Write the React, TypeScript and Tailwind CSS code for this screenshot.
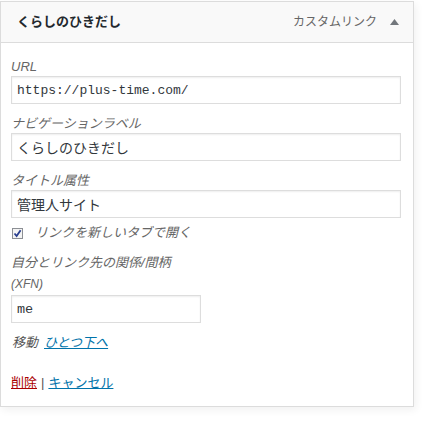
const jp = '"Liberation Sans", "Noto Sans CJK JP", sans-serif'
const mono = '"Liberation Mono", "DejaVu Sans Mono", monospace'

function Field({ label, value, monoText }: { label: React.ReactNode; value: string; monoText?: boolean }) {
  return (
    <div className="mb-[10px]">
      <div className="text-[13px] leading-[19px] italic text-[#666]">{label}</div>
      <input
        readOnly
        value={value}
        style={{ fontFamily: monoText ? mono : jp }}
        className={`w-[390px] h-[28px] border border-[#ddd] bg-white pl-[5px] ${monoText ? 'text-[13px]' : 'text-[14px]'} text-[#32373c] shadow-[inset_0_1px_2px_rgba(0,0,0,0.07)] outline-none`}
      />
    </div>
  )
}

export default function App() {
  return (
    <div className="w-[429px] h-[423px] bg-white pt-px" style={{ fontFamily: jp }}>
      <div className="w-[414px] border border-[#dcdcdc] bg-white shadow-[2px_3px_8px_rgba(0,0,0,0.06)]">
        {/* header */}
        <div className="h-[41px] flex items-center justify-between bg-[#f9f9f9] border-b border-[#dcdcdc] pl-[16px] pr-[14px]">
          <span className="text-[13px] font-bold text-[#23282d]">くらしのひきだし</span>
          <div className="flex items-center gap-[13px]">
            <span className="text-[12px] text-[#666]">カスタムリンク</span>
            <svg width="9" height="6" viewBox="0 0 9 6">
              <path d="M4.5 0 L9 6 L0 6 Z" fill="#72777c" />
            </svg>
          </div>
        </div>

        {/* body */}
        <div className="pl-[10px] pt-[14px] pb-[13px]">
          <Field label="URL" value="https://plus-time.com/" monoText />
          <Field label="ナビゲーションラベル" value="くらしのひきだし" />
          <Field label="タイトル属性" value="管理人サイト" />

          <div className="-mt-[5px] h-[20px] flex items-center">
            <div className="w-[11px] h-[11px] ml-[1px] border border-[#8c8f94] bg-[#f4f4f4] flex items-center justify-center">
              <svg width="9" height="9" viewBox="0 0 9 9">
                <path d="M1.5 4.5 L3.6 7 L7.6 1.2" stroke="#2a3f8f" strokeWidth="1.8" fill="none" />
              </svg>
            </div>
            <span className="ml-[12px] text-[13px] italic text-[#666]">リンクを新しいタブで開く</span>
          </div>

          <div className="mt-[10px] text-[13px] leading-[20px] italic text-[#666]">自分とリンク先の関係/間柄</div>
          <div className="text-[12px] leading-[22px] italic text-[#666]">(XFN)</div>
          <input
            readOnly
            value="me"
            style={{ fontFamily: mono }}
            className="w-[190px] h-[28px] border border-[#ddd] bg-white pl-[5px] text-[13.5px] text-[#32373c] shadow-[inset_0_1px_2px_rgba(0,0,0,0.07)] outline-none"
          />

          <div className="mt-[10px] h-[20px] flex items-center text-[13px] italic">
            <span className="text-[#555] ml-[1px]">移動</span>
            <a className="ml-[6px] text-[#0073aa] underline">ひとつ下へ</a>
          </div>

          <div className="mt-[20px] h-[20px] flex items-center text-[13px]">
            <a className="text-[#a00] underline">削除</a>
            <span className="text-[#555] mx-[4px]">|</span>
            <a className="text-[#0073aa] underline">キャンセル</a>
          </div>
        </div>
      </div>
    </div>
  )
}
